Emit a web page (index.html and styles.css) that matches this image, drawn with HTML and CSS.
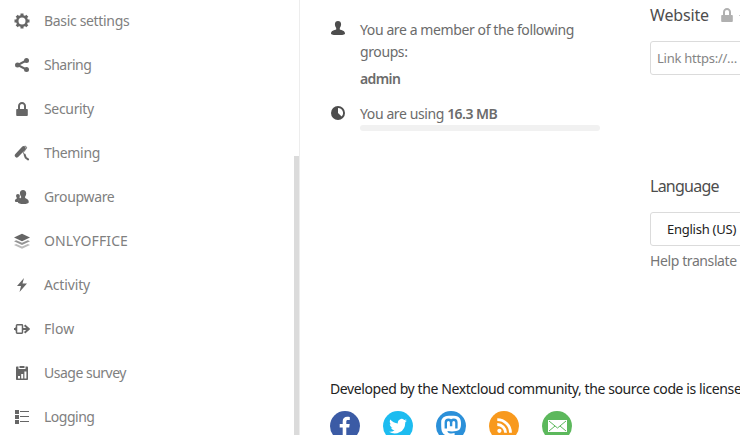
FILE: index.html
```html
<!DOCTYPE html>
<html lang="en">
<head>
<meta charset="utf-8">
<title>Personal settings</title>
<link rel="stylesheet" href="styles.css">
</head>
<body>
<div class="app">
  <nav class="sidebar">
    <ul class="menu">
      <li><svg viewBox="0 0 16 16"><path d="M8 .5v15M.5 8h15M2.700 2.700l10.600 10.600M2.700 13.300L13.300 2.700" stroke="currentColor" stroke-width="3"/><circle cx="8" cy="8" r="6"/><circle cx="8" cy="8" r="3.500" fill="#fff"/></svg><span>Basic settings</span></li>
      <li><svg viewBox="0 0 16 16"><path d="M12.300 3.500L3.700 8l8.600 4.500" fill="none" stroke="currentColor" stroke-width="2"/><circle cx="12.500" cy="3.500" r="2.500"/><circle cx="3.500" cy="8" r="2.500"/><circle cx="12.500" cy="12.500" r="2.500"/></svg><span class="tight">Sharing</span></li>
      <li><svg viewBox="0 0 16 16"><path d="M8 1C5.800 1 4 2.800 4 5v3H3c-.5 0-.8.3-.8.8V14c0 .6.3 1 .8 1h10c.5 0 .8-.4.8-1V8.800c0-.5-.3-.8-.8-.8h-1V5c0-2.200-1.800-4-4-4zm0 2c1.200 0 2 .9 2 2v3H6V5c0-1.100.8-2 2-2z"/></svg><span>Security</span></li>
      <li><svg viewBox="0 0 16 16"><path d="M2.900 10.400L9.600 3.300" stroke="currentColor" stroke-width="4.200" stroke-linecap="round"/><path d="M10.500 1.300c2.300-.2 2.700 1.400 1 3.300L9.400 7.200c-.6.9.4 1.500 1.200 2.300" fill="none" stroke="currentColor" stroke-width="1"/><path d="M10.600 9.600l1.100 3.100 2.400 1.700" fill="none" stroke="currentColor" stroke-width="2" stroke-linecap="round"/></svg><span>Theming</span></li>
      <li><svg viewBox="0 0 16 16"><path d="M9 1C7 1 5.800 2.300 5.900 4.200 6 5.800 6.600 7 7.100 7.600v1.500C5 9.800 3.900 10.800 3.900 13c0 1.500 2.600 2 5.600 2s5.300-.5 5.300-2c0-2.100-1.600-3-3.700-3.900V7.600c.6-.7 1.100-1.900 1.100-3.400C12.200 2.300 11 1 9 1z"/><path d="M3.900 5C2.700 5 2 5.800 2.100 7c0 .8.300 1.400.7 1.800v.8C1.600 10 .9 10.800.9 12c0 .9 1 1.100 3.200 1.100.1-1.900 1.300-3.300 3-4l-1.800-.4c.4-.5.5-1 .5-1.700C5.900 5.800 5.200 5 3.900 5z"/></svg><span>Groupware</span></li>
      <li><svg viewBox="0 0 16 16"><path opacity=".45" d="M0 12l2.200-1.100L8 13.400l5.800-2.500L16 12l-8 3.800z"/><path opacity=".7" d="M0 8.300l2.200-1.100L8 9.700l5.800-2.500L16 8.300l-8 3.800z"/><path d="M8 .8l8 3.700-8 3.800-8-3.800z"/></svg><span class="loose">ONLYOFFICE</span></li>
      <li><svg viewBox="0 0 16 16"><path d="M10 1L3 9h4l-1.500 6L13 6.500H8.500z"/></svg><span class="normal">Activity</span></li>
      <li><svg viewBox="0 0 16 16"><path d="M3 4.500v1.600L1 8l2 1.900v1.600" fill="none" stroke="currentColor" stroke-width="1.500"/><rect x="2.500" y="3.800" width="6" height="8.400" rx=".7" fill="#fff" stroke="currentColor" stroke-width="1.500"/><path d="M0 8h2M8 8h6.500M10.600 4.200L14.800 8l-4.200 3.800" fill="none" stroke="currentColor" stroke-width="1.900"/></svg><span class="loose">Flow</span></li>
      <li><svg viewBox="0 0 16 16"><path d="M3 1.500h1.500V4h7V1.500H13c.6 0 1 .4 1 1V14c0 .6-.4 1-1 1H3c-.6 0-1-.4-1-1V2.500c0-.6.4-1 1-1z"/><path d="M5.500 1h5v2h-5z"/><path d="M4 11h2v2.500H4zM7.200 9h2v4.500h-2zM10.400 6.500h2v7h-2z" fill="#fff"/></svg><span class="tight">Usage survey</span></li>
      <li><svg viewBox="0 0 16 16"><path d="M1 1h4v4H1zM1 6h4v4H1zM1 11h4v4H1zM6 2h9v1H6zM6 7h9v1H6zM6 12h9v1H6z"/></svg><span class="tight">Logging</span></li>
    </ul>
    <div class="scrollthumb"></div>
  </nav>
  <main class="content">
    <div class="columns">
      <section class="details">
        <div class="row groups">
          <svg viewBox="0 0 16 16"><path d="M8 1C6.200 1 4.800 2.200 4.900 4.300c.1 1.800.7 3 1.300 3.600v1.600C4.600 10.200 1 10.600 1 13.400 1 14.600 3.500 15 8 15s7-.4 7-1.600c0-2.800-3.600-3.200-5.200-3.900V7.900c.6-.6 1.200-1.800 1.300-3.600C11.200 2.200 9.800 1 8 1z"/></svg>
          <div class="text"><p>You are a member of the following groups:</p><p class="group"><strong>admin</strong></p></div>
        </div>
        <div class="row quota">
          <svg viewBox="0 0 16 16"><circle cx="8" cy="8" r="7"/><path d="M8 3a5 5 0 0 1 3.600 8.500L8 8z" fill="#fff"/></svg>
          <div class="text"><p>You are using <strong>16.3 MB</strong></p><div class="bar"></div></div>
        </div>
      </section>
      <section class="fields">
        <h3>Website <svg viewBox="0 0 16 16"><path d="M8 1C5.800 1 4 2.800 4 5v3H3c-.5 0-.8.3-.8.8V14c0 .6.3 1 .8 1h10c.5 0 .8-.4.8-1V8.800c0-.5-.3-.8-.8-.8h-1V5c0-2.200-1.800-4-4-4zm0 2c1.200 0 2 .9 2 2v3H6V5c0-1.100.8-2 2-2z"/></svg><i class="caret"></i></h3>
        <div class="input link">Link https://…</div>
        <h3 class="language">Language</h3>
        <div class="input select">English (US)</div>
        <a class="help">Help translate</a>
      </section>
    </div>
    <footer>
      <p>Developed by the Nextcloud community, the source code is license</p>
      <div class="social">
        <svg viewBox="0 0 30 30"><circle cx="15" cy="15" r="15" fill="#3b5ba5"/><path fill="#fff" d="M12.700 26V16.500H9.700v-3.600h3v-2.700c0-3 1.800-4.500 4.500-4.500 1.200 0 2.300.1 2.600.2v3.200H18c-1.500 0-1.700.7-1.700 1.700v2.100h3.400l-.5 3.600h-2.900V26z"/></svg>
        <svg viewBox="0 0 30 30"><circle cx="15" cy="15" r="15" fill="#1dbcf0"/><path fill="#fff" d="M24 9.600c-.7.300-1.400.5-2.100.6.800-.5 1.300-1.200 1.600-2-.7.400-1.500.7-2.300.9a3.700 3.700 0 0 0-6.300 3.300c-3-.1-5.800-1.600-7.600-3.800-1 1.700-.5 3.900 1.100 4.900-.6 0-1.200-.2-1.600-.5 0 1.800 1.200 3.300 2.900 3.700-.5.100-1.100.2-1.600.1.500 1.400 1.800 2.500 3.400 2.500A7.400 7.400 0 0 1 6 20.800a10.500 10.500 0 0 0 16.200-9.300c.7-.5 1.300-1.200 1.800-1.900z"/></svg>
        <svg viewBox="0 0 30 30"><circle cx="15" cy="15" r="15" fill="#2b90d9"/><path fill="#fff" d="M25 12c0-5-3-6.600-5-6.900-2.800-.5-6.800-.5-9.200 0C7.500 5.700 5.200 8 5.200 11c0 4-.2 8 1.300 10.600 1.700 3.600 8 4 12.100 2.500v-2c-3 .8-7 .6-7.200-2.200 4 .9 9.600.6 11.900-1.200C25 17.200 25 14 25 12z"/><path fill="none" stroke="#2b90d9" stroke-width="2.400" d="M9.800 17.500v-6c0-3.600 5.300-3.600 5.300 0v3.800-3.800c0-3.600 5.300-3.600 5.300 0v6"/></svg>
        <svg viewBox="0 0 30 30"><circle cx="15" cy="15" r="15" fill="#f8991d"/><circle cx="10.400" cy="19.800" r="2.100" fill="#fff"/><path fill="none" stroke="#fff" stroke-width="2.800" d="M8.300 13.500a8.300 8.300 0 0 1 8.300 8.300M8.300 8.600a13.200 13.200 0 0 1 13.200 13.200"/></svg>
        <svg viewBox="0 0 30 30"><circle cx="15" cy="15" r="15" fill="#5cb85c"/><path fill="#fff" d="M6 9h19v12H6z"/><path fill="none" stroke="#5cb85c" d="M7 10l8.500 7L24 10M7 20l6-5M24 20l-6-5"/></svg>
      </div>
    </footer>
  </main>
</div>
</body>
</html>
```
FILE: styles.css
```css
* { box-sizing: border-box; }
body { margin: 0; background: #fff; font: 14px/22px "Noto Sans", sans-serif; letter-spacing: -.4px; color: #222; overflow: hidden; }
p, h3, ul { margin: 0; padding: 0; }
svg { fill: currentColor; flex: none; width: 16px; height: 16px; }
.app { display: flex; height: 435px; overflow: hidden; }
.sidebar { position: relative; width: 300px; flex: none; border-right: 1px solid #ededed; overflow: hidden; }
.menu { list-style: none; margin-top: -1px; }
.menu li { display: flex; align-items: center; height: 44px; padding-left: 14px; gap: 14px; color: #666; }
.menu span { color: #808080; letter-spacing: -.33px; }
.menu .tight { letter-spacing: -.5px; }
.menu .normal { letter-spacing: -.15px; }
.menu .loose { letter-spacing: .1px; }
.scrollthumb { position: absolute; right: 0; top: 156px; width: 5px; height: 279px; background: #dbdbdb; }
.content { flex: none; width: 520px; padding-left: 30px; }
.columns { display: flex; height: 378px; }
.details { width: 320px; padding-top: 19px; color: #4d4d4d; }
.row { display: flex; gap: 14px; }
.row svg { margin-top: 1px; }
.row .text { width: 240px; color: #6b6b6b; }
.group { margin-top: 5px; }
strong { font-weight: 600; letter-spacing: -.55px; }
.group strong { letter-spacing: -.6px; }
.quota { margin-top: 13px; }
.quota svg { margin-top: 2px; }
.bar { height: 6px; border-radius: 3px; background: #f1f1f1; }
.fields { width: 170px; padding-top: 4px; }
h3 { display: flex; align-items: center; font-size: 16px; font-weight: 400; line-height: 22px; letter-spacing: -.15px; color: #4d4d4d; }
h3 svg { margin-left: 10px; color: #b0b0b0; }
.caret { width: 5px; height: 1px; margin-left: 4px; background: #ccc; }
.input { width: 160px; height: 34px; border: 1px solid #dbdbdb; border-radius: 3px; font-size: 13px; line-height: 32px; padding-left: 6px; letter-spacing: -.25px; white-space: nowrap; }
.link { margin-top: 15px; color: #858585; }
.language { margin-top: 100px; letter-spacing: -.75px; }
.select { margin-top: 15px; padding-left: 16px; }
.help { display: block; margin-top: 4px; color: #767676; }
footer p { white-space: nowrap; }
.social { display: flex; gap: 23px; margin-top: 11px; }
.social svg { width: 30px; height: 30px; }
```
